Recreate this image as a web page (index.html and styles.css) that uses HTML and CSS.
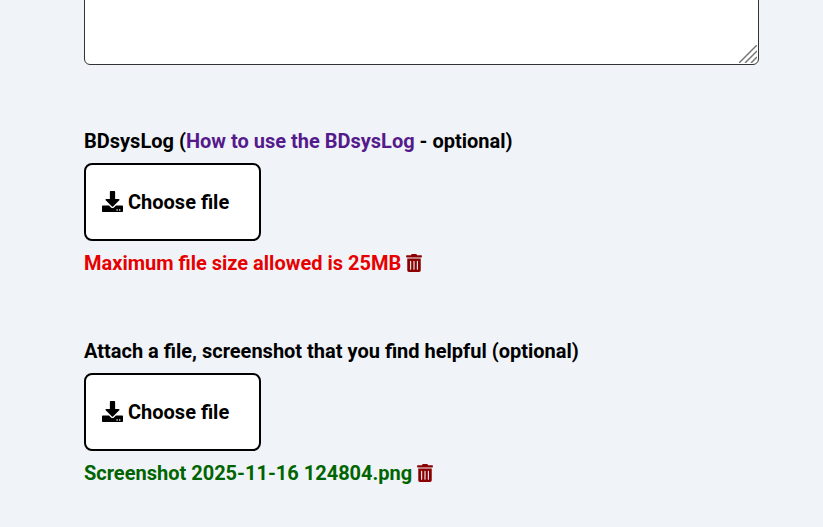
FILE: index.html
```html
<!DOCTYPE html>
<html lang="en">
<head>
    <meta charset="UTF-8">
    <meta name="viewport" content="width=device-width, initial-scale=1.0">
    <title>Report form</title>
    <link rel="stylesheet" href="styles.css">
</head>
<body>
    <form class="report-form">
        <div class="text-wrap">
            <textarea class="report-text"></textarea>
            <svg class="resize-grip" viewBox="0 0 18 18"><path d="M0 18L18 0M6 18L18 6M12 18L18 12"/></svg>
        </div>

        <div class="form-group">
            <div class="form-label">BDsysLog (<a class="form-link" href="#">How to use the BDsysLog</a> - optional)</div>
            <label class="file-button">
                <svg class="icon-download" viewBox="0 0 512 512"><path d="M216 0h80c13.3 0 24 10.7 24 24v168h87.7c17.8 0 26.7 21.5 14.1 34.1L269.7 378.3c-7.5 7.5-19.8 7.5-27.3 0L90.1 226.1c-12.6-12.6-3.7-34.1 14.1-34.1H192V24c0-13.3 10.7-24 24-24zm296 376v112c0 13.3-10.7 24-24 24H24c-13.3 0-24-10.7-24-24V376c0-13.3 10.7-24 24-24h146.7l49 49c20.1 20.1 52.5 20.1 72.6 0l49-49H488c13.3 0 24 10.7 24 24zm-124 88c0-11-9-20-20-20s-20 9-20 20 9 20 20 20 20-9 20-20zm64 0c0-11-9-20-20-20s-20 9-20 20 9 20 20 20 20-9 20-20z"/></svg>
                Choose file
            </label>
            <div class="file-status status-error">
                Maximum file size allowed is 25MB
                <svg class="icon-trash" viewBox="0 0 448 512"><path d="M32 464a48 48 0 0 0 48 48h288a48 48 0 0 0 48-48V128H32zm272-256a16 16 0 0 1 32 0v224a16 16 0 0 1-32 0zm-96 0a16 16 0 0 1 32 0v224a16 16 0 0 1-32 0zm-96 0a16 16 0 0 1 32 0v224a16 16 0 0 1-32 0zM432 32H312l-9.4-18.7A24 24 0 0 0 281.1 0H166.8a23.72 23.72 0 0 0-21.4 13.3L136 32H16A16 16 0 0 0 0 48v32a16 16 0 0 0 16 16h416a16 16 0 0 0 16-16V48a16 16 0 0 0-16-16z"/></svg>
            </div>
        </div>

        <div class="form-group">
            <div class="form-label">Attach a file, screenshot that you find helpful (optional)</div>
            <label class="file-button">
                <svg class="icon-download" viewBox="0 0 512 512"><path d="M216 0h80c13.3 0 24 10.7 24 24v168h87.7c17.8 0 26.7 21.5 14.1 34.1L269.7 378.3c-7.5 7.5-19.8 7.5-27.3 0L90.1 226.1c-12.6-12.6-3.7-34.1 14.1-34.1H192V24c0-13.3 10.7-24 24-24zm296 376v112c0 13.3-10.7 24-24 24H24c-13.3 0-24-10.7-24-24V376c0-13.3 10.7-24 24-24h146.7l49 49c20.1 20.1 52.5 20.1 72.6 0l49-49H488c13.3 0 24 10.7 24 24zm-124 88c0-11-9-20-20-20s-20 9-20 20 9 20 20 20 20-9 20-20zm64 0c0-11-9-20-20-20s-20 9-20 20 9 20 20 20 20-9 20-20z"/></svg>
                Choose file
            </label>
            <div class="file-status status-ok">
                Screenshot 2025-11-16 124804.png
                <svg class="icon-trash" viewBox="0 0 448 512"><path d="M32 464a48 48 0 0 0 48 48h288a48 48 0 0 0 48-48V128H32zm272-256a16 16 0 0 1 32 0v224a16 16 0 0 1-32 0zm-96 0a16 16 0 0 1 32 0v224a16 16 0 0 1-32 0zm-96 0a16 16 0 0 1 32 0v224a16 16 0 0 1-32 0zM432 32H312l-9.4-18.7A24 24 0 0 0 281.1 0H166.8a23.72 23.72 0 0 0-21.4 13.3L136 32H16A16 16 0 0 0 0 48v32a16 16 0 0 0 16 16h416a16 16 0 0 0 16-16V48a16 16 0 0 0-16-16z"/></svg>
            </div>
        </div>
    </form>
</body>
</html>
```
FILE: styles.css
```css
* {
    box-sizing: border-box;
    margin: 0;
    padding: 0;
    font-family: Roboto, sans-serif;
}

html, body {
    height: 527px;
    overflow: hidden;
}

body {
    background: #f0f4f9;
    color: #000;
}

.report-form {
    display: flex;
    flex-direction: column;
    gap: 64px;
    padding: 0 64px 0 84px;
}

.text-wrap {
    position: relative;
    margin-top: -55px;
}

.report-text {
    display: block;
    width: 100%;
    height: 120px;
    background: #fff;
    border: 1px solid #333;
    border-radius: 6px;
    resize: none;
}

.resize-grip {
    position: absolute;
    right: 2px;
    bottom: 2px;
    width: 18px;
    height: 18px;
    fill: none;
    stroke: #777;
    stroke-width: 1.5;
}

.form-label {
    font-size: 20px;
    font-weight: 700;
    line-height: 24px;
    margin-bottom: 10px;
}

.form-link {
    color: #551a8b;
    text-decoration: none;
}

.file-button {
    display: flex;
    align-items: center;
    gap: 5px;
    width: 177px;
    height: 78px;
    padding-left: 16px;
    background: #fff;
    border: 2px solid #000;
    border-radius: 8px;
    font-size: 20px;
    font-weight: 700;
}

.icon-download {
    width: 21px;
    height: 21px;
    margin-top: -1px;
    fill: #000;
}

.file-status {
    display: flex;
    align-items: center;
    gap: 5px;
    margin-top: 10px;
    font-size: 20px;
    font-weight: 700;
    line-height: 24px;
}

.status-error {
    color: #e60000;
}

.status-ok {
    color: #006400;
}

.icon-trash {
    width: 16px;
    height: 18px;
    fill: #8b0000;
}
```
